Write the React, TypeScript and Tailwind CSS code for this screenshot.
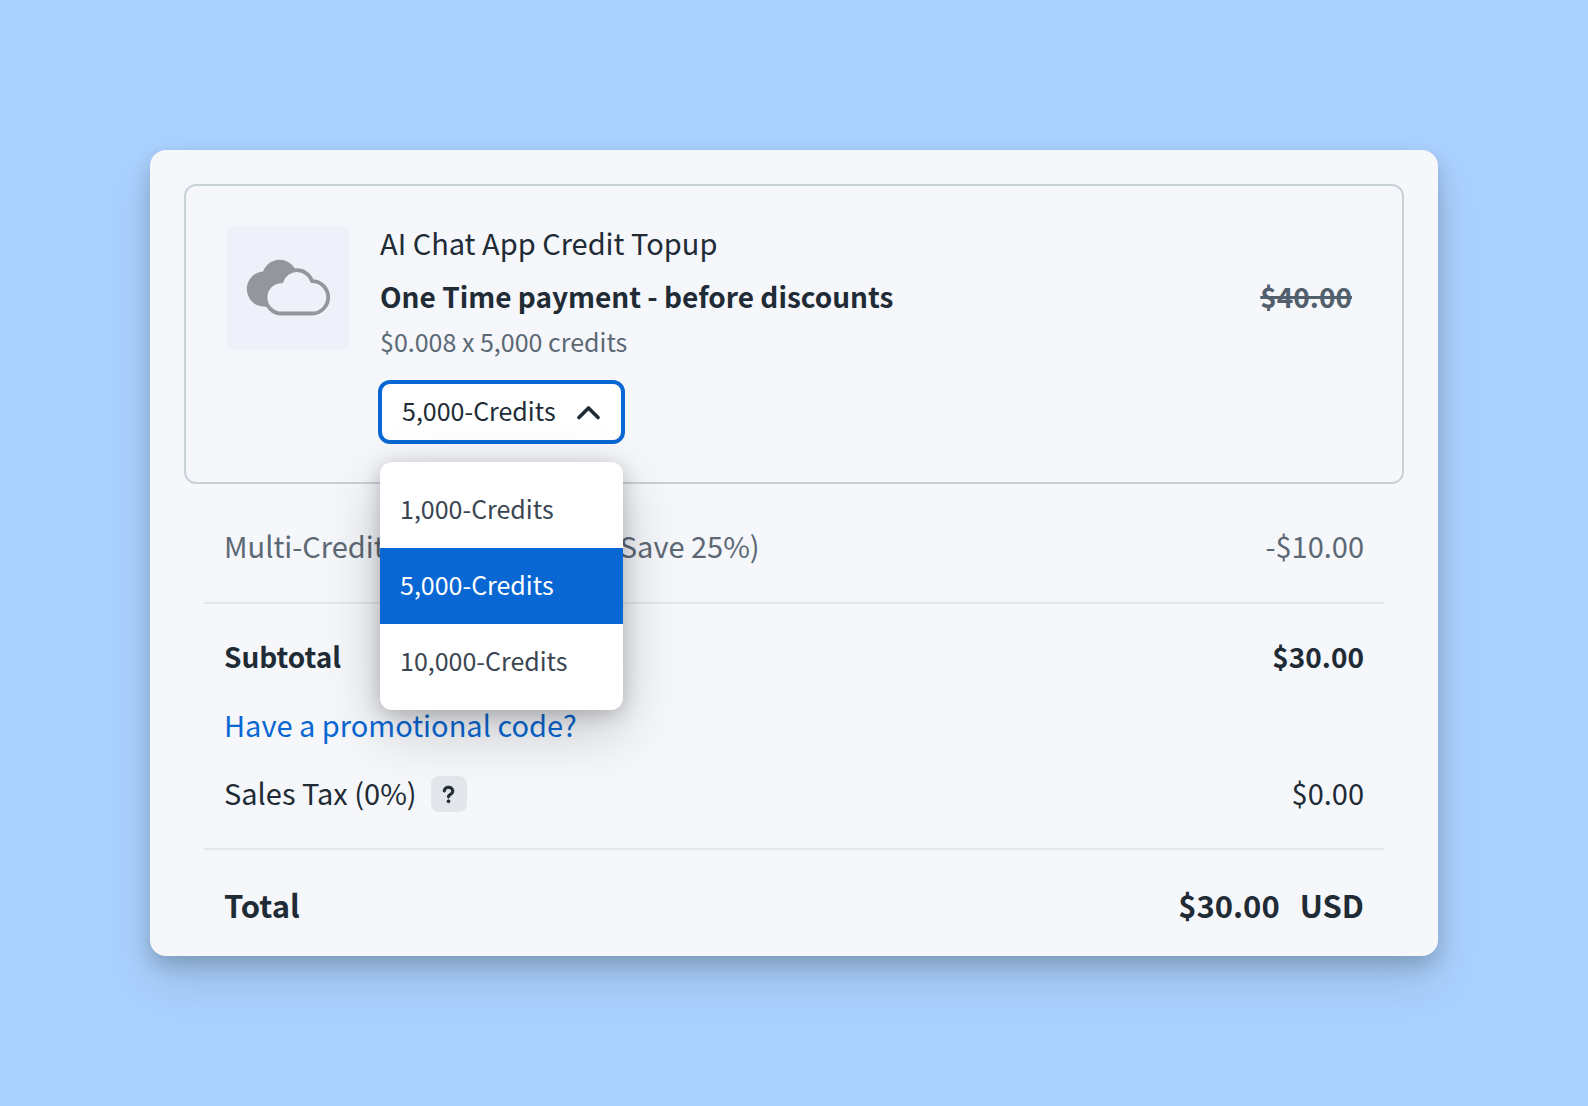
import { useState } from "react";
import { FaQuestion } from "react-icons/fa6";

const options = ["1,000-Credits", "5,000-Credits", "10,000-Credits"];

const CloudIcon = () => (
  <svg width="124" height="124" viewBox="0 0 124 124" fill="none" aria-hidden="true">
    <circle cx="38.4" cy="63" r="17.6" fill="#95959d" />
    <circle cx="53.6" cy="51.4" r="17.6" fill="#95959d" />
    <path d="M38 80.6L60 80L66 52L40 50Z" fill="#95959d" />
    <path
      d="M86 87.5H55.6A16.1 16.1 0 0 1 55.6 55.3A16 16 0 0 1 86 55.1A16.2 16.2 0 0 1 86 87.5Z"
      fill="#f0f0fa"
      stroke="#95959d"
      strokeWidth="3.8"
      strokeLinejoin="round"
    />
  </svg>
);

const CreditPicker = () => {
  const [open, setOpen] = useState(true);
  const [selected, setSelected] = useState("5,000-Credits");

  return (
    <div className="relative -ml-0.5 mt-4 w-[247px]">
      <select
        aria-label="Credits"
        value={selected}
        onMouseDown={(e) => {
          e.preventDefault();
          setOpen(!open);
        }}
        onChange={(e) => setSelected(e.target.value)}
        className="h-16 w-full cursor-pointer appearance-none rounded-xl border-4 border-[#0967d3] bg-white pb-1 pl-5 pr-14 text-[25px] leading-10 text-[#202b35] outline-none"
      >
        {options.map((option) => (
          <option key={option}>{option}</option>
        ))}
      </select>
      <svg
        className="pointer-events-none absolute right-6 top-5"
        width="24"
        height="24"
        viewBox="0 0 24 24"
        fill="none"
        stroke="#202b35"
        strokeWidth="3.6"
        strokeLinecap="round"
        strokeLinejoin="round"
        aria-hidden="true"
      >
        <path d="M2 17.5L11.5 8L21 17.5" />
      </svg>
      {open && (
        <ul className="absolute left-0.5 top-[82px] z-10 w-[243px] rounded-xl bg-white py-2.5 shadow-[0_20px_60px_rgba(0,0,0,0.2),0_4px_20px_rgba(0,0,0,0.2)]">
          {options.map((option) => (
            <li key={option}>
              <button
                type="button"
                onClick={() => {
                  setSelected(option);
                  setOpen(false);
                }}
                className={
                  option === selected
                    ? "h-[76px] w-full bg-[#0967d3] px-5 pb-1 text-left text-[25px] leading-10 text-white"
                    : "h-[76px] w-full px-5 pb-1 text-left text-[25px] leading-10 text-[#3a4552]"
                }
              >
                {option}
              </button>
            </li>
          ))}
        </ul>
      )}
    </div>
  );
};

const App = () => {
  return (
    <main className="flex min-h-screen items-center justify-center bg-[#abd1fe] px-[150px] font-['Noto_Sans_CJK_SC',sans-serif] text-[29px] leading-[44px] text-[#202b35]">
      <section className="w-full rounded-2xl bg-[#f5f7fb] px-[34px] pb-3.5 pt-[34px] shadow-[0_26px_50px_rgba(0,0,0,0.1),0_10px_20px_rgba(0,0,0,0.18)]">
        <div className="flex rounded-xl border-2 border-[#c9d1d9] px-10 pb-[38px] pt-10">
          <div className="h-[124px] w-[124px] flex-none overflow-hidden rounded-lg bg-[#f0f0fa]">
            <CloudIcon />
          </div>
          <div className="ml-[30px] flex-1">
            <h2 className="leading-8">AI Chat App Credit Topup</h2>
            <div className="mt-4 flex items-center justify-between pr-2.5 text-[28px] font-bold">
              <h3>One Time payment - before discounts</h3>
              <s className="text-[#52606d] decoration-3">$40.00</s>
            </div>
            <p className="text-[25px] leading-[46px] text-[#5c6975]">$0.008 x 5,000 credits</p>
            <CreditPicker />
          </div>
        </div>

        <div className="mx-5 mt-[30px] flex h-[88px] items-start justify-between px-5 leading-[62px] text-[#5c6975]">
          <span>Multi-Credit Topup Discount (Save 25%)</span>
          <span>-$10.00</span>
        </div>

        <div className="mx-5 border-y-2 border-[#e4e6ea] px-5 py-5">
          <div className="flex h-[68px] items-center justify-between pb-1 text-[28px] font-bold">
            <span>Subtotal</span>
            <span>$30.00</span>
          </div>
          <div className="flex h-[68px] items-center pb-1">
            <a href="#" className="text-[#0967d3]">
              Have a promotional code?
            </a>
          </div>
          <div className="flex h-[68px] items-center justify-between">
            <div className="flex items-center gap-3.5">
              <span className="pb-1">Sales Tax (0%)</span>
              <button
                type="button"
                aria-label="About sales tax"
                className="flex h-9 w-9 items-center justify-center rounded-lg bg-[#e3e6eb]"
              >
                <FaQuestion size={19} className="stroke-current stroke-[24]" />
              </button>
            </div>
            <span className="pb-1">$0.00</span>
          </div>
        </div>

        <div className="mx-5 mt-5 flex h-[72px] items-center justify-between px-5 pb-0.5 text-[31px] font-bold">
          <span>Total</span>
          <span className="flex gap-5">
            <span>$30.00</span>
            <span>USD</span>
          </span>
        </div>
      </section>
    </main>
  );
};

export default App;
